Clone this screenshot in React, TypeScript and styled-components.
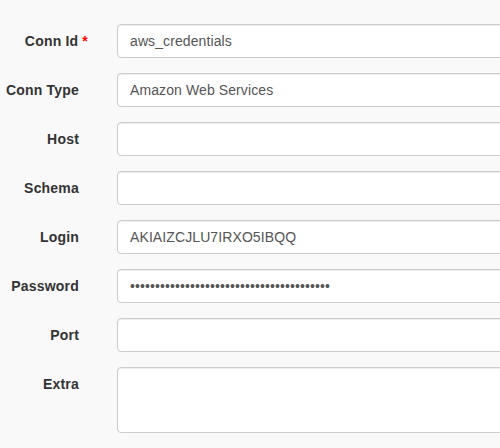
import React from "react";
import styled, { createGlobalStyle } from "styled-components";

const Global = createGlobalStyle`
  html, body {
    margin: 0;
    padding: 0;
    background: #f9f9f9;
    overflow: hidden;
  }
  body {
    font-family: "Liberation Sans", Arial, Helvetica, sans-serif;
    font-size: 14px;
    line-height: 20px;
    color: #333;
  }
`;

const Form = styled.form`
  display: flex;
  flex-direction: column;
  gap: 15px;
  padding-top: 24px;
  width: 540px;
`;

const Row = styled.div`
  display: flex;
  align-items: flex-start;
`;

const Label = styled.label`
  width: 79px;
  flex: none;
  text-align: right;
  font-weight: bold;
  padding-top: 7px;
  line-height: 20px;
  letter-spacing: 0.2px;
  color: #333;
  white-space: nowrap;
`;

const Star = styled.strong`
  color: #f00;
  margin-left: 4px;
  margin-right: -9px;
`;

const fieldCss = `
  box-sizing: border-box;
  margin-left: 38px;
  width: 420px;
  flex: none;
  padding: 6px 12px;
  font-family: "Liberation Sans", Arial, Helvetica, sans-serif;
  font-size: 14px;
  line-height: 20px;
  letter-spacing: 0.1px;
  color: #555;
  background: #fff;
  border: 1px solid #ccc;
  border-radius: 4px;
  box-shadow: inset 0 1px 1px rgba(0,0,0,0.075);
  outline: none;
`;

const Input = styled.input`
  ${fieldCss}
  height: 34px;
`;

const TextArea = styled.textarea`
  ${fieldCss}
  height: 66px;
  resize: none;
  display: block;
`;

const fields: { label: string; value?: string; type?: string; required?: boolean }[] = [
  { label: "Conn Id", value: "aws_credentials", required: true },
  { label: "Conn Type", value: "Amazon Web Services" },
  { label: "Host" },
  { label: "Schema" },
  { label: "Login", value: "AKIAIZCJLU7IRXO5IBQQ" },
  { label: "Password", value: "x".repeat(40), type: "password" },
  { label: "Port" },
];

export default function App() {
  return (
    <>
      <Global />
      <Form onSubmit={(e) => e.preventDefault()}>
        {fields.map((f) => (
          <Row key={f.label}>
            <Label>
              {f.label}
              {f.required && <Star>*</Star>}
            </Label>
            <Input type={f.type ?? "text"} value={f.value ?? ""} readOnly />
          </Row>
        ))}
        <Row>
          <Label>Extra</Label>
          <TextArea value="" readOnly />
        </Row>
      </Form>
    </>
  );
}
